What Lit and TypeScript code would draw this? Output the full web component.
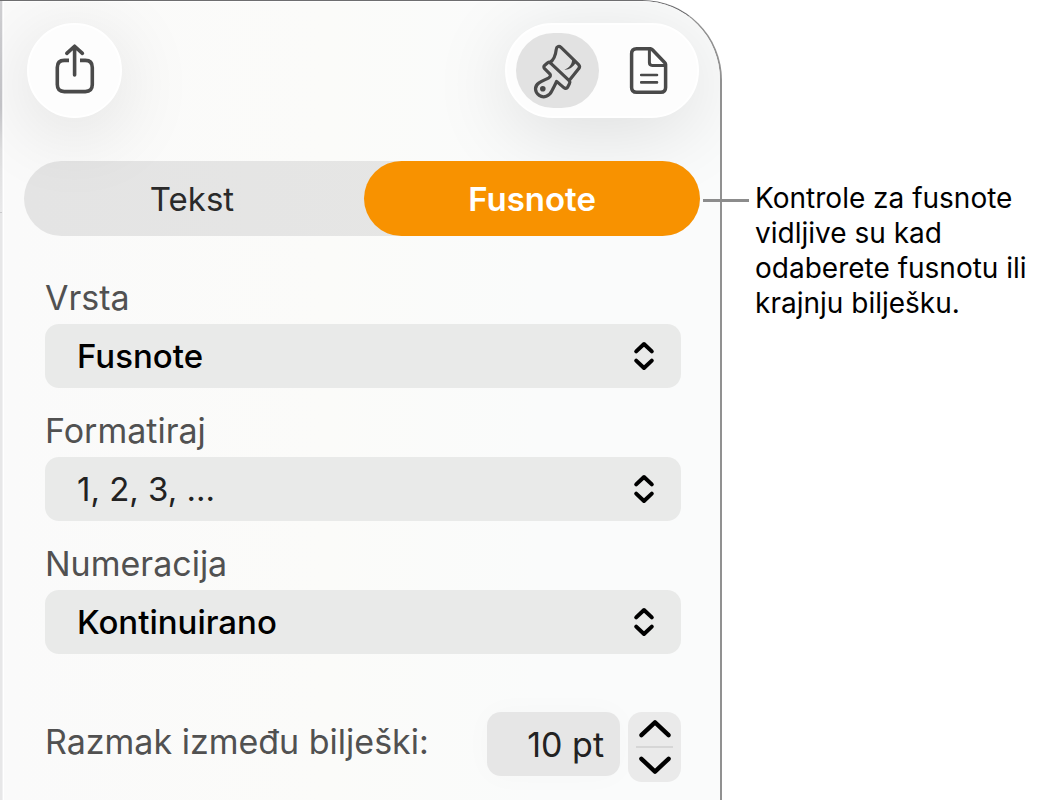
import { LitElement, html, css, svg } from "lit";
import { customElement, property, state } from "lit/decorators.js";
import { classMap } from "lit/directives/class-map.js";

const shareIcon = svg`
  <svg viewBox="0 0 60 60" aria-hidden="true">
    <g fill="none" stroke="currentColor" stroke-width="3.6" stroke-linecap="round" stroke-linejoin="round">
      <path stroke-linecap="butt" d="M24 19.4H19.3Q12.3 19.4 12.3 26.4V43.6Q12.3 50.6 19.3 50.6H40.3Q47.3 50.6 47.3 43.6V26.4Q47.3 19.4 40.3 19.4H35"/>
      <path d="M29.6 34V5.6M21.8 12.4L29.6 5.2L37.4 12.4"/>
    </g>
  </svg>`;

const brushIcon = svg`
  <svg viewBox="0 0 60 60" aria-hidden="true">
    <g fill="none" stroke="currentColor" stroke-width="3.2" stroke-linecap="round" stroke-linejoin="round">
      <path d="M21.8 21.6C26.4 18.6 27.6 14.6 28.2 8.6C28.5 5.6 30.8 4.4 33 6.4L50.4 23.4Q52.6 25.6 50.6 27.8L41.2 39.6"/>
      <path d="M21.8 21.4L41.2 39.6Q42.4 41 41.4 42.8L39.6 46.2Q38 48.4 35.8 46.6L28.6 40.4C27.6 43 26 45.6 24 49.6C21.4 55.4 15.6 57.4 11.2 54.4C6.4 51 6.2 45 11 41.8C14.6 39.6 18.4 38.2 20.8 36.8Q23.4 35 21.8 32.8L16.6 27.6Q15 25.8 16.8 24.2L19.4 22Q20.6 20.6 21.8 21.4Z"/>
    </g>
    <path fill="currentColor" d="M44 17.2C44.6 22.4 42 26.4 36.4 28.8C40.6 29.2 44.6 26.8 48 21.8Z"/>
    <circle fill="currentColor" cx="14.8" cy="47.8" r="2.8"/>
  </svg>`;

const documentIcon = svg`
  <svg viewBox="0 0 60 60" aria-hidden="true">
    <g fill="none" stroke="currentColor" stroke-linecap="round" stroke-linejoin="round">
      <path stroke-width="3.5" d="M31.6 7.8H17.6Q12.6 7.8 12.6 12.8V46.4Q12.6 51.2 17.6 51.2H41.8Q46.6 51.2 46.6 46.4V23.4Q46.6 22.4 45.6 21.4L33.4 8.8Q32.4 7.8 31.6 7.8Z"/>
      <path stroke-width="3" d="M30.4 8V21.6Q30.4 24.4 33.2 24.4H46"/>
      <path stroke-width="2.6" d="M22.2 34H38M22.2 41.4H38"/>
    </g>
  </svg>`;

const BASE = css`
  :host {
    font-family: Inter, "Liberation Sans", sans-serif;
  }
  *,
  *::before {
    box-sizing: border-box;
  }
  button,
  input,
  select {
    margin: 0;
    padding: 0;
    border: 0;
    font: inherit;
    color: inherit;
    background: none;
  }
`;

@customElement("popup-field")
class PopupField extends LitElement {
  @property() label = "";
  @property({ type: Array }) options: string[] = [];
  @property({ type: Boolean }) strong = false;

  static styles = [
    BASE,
    css`
      :host {
        display: block;
      }
      .label {
        display: block;
        margin-bottom: 5px;
        font-size: 34px;
        line-height: 42px;
        color: #515151;
      }
      .box {
        display: grid;
        align-items: center;
        border-radius: 14px;
        background: #e9eae9;
      }
      .select {
        grid-area: 1 / 1;
        width: 100%;
        height: 64px;
        padding: 0 64px 0 32px;
        appearance: none;
        font-size: 33px;
        color: #222;
      }
      .strong {
        font-weight: 500;
        color: #000;
      }
      .arrows {
        grid-area: 1 / 1;
        justify-self: end;
        width: 22px;
        height: 32px;
        margin-right: 26px;
        pointer-events: none;
      }
    `,
  ];

  render() {
    return html`
      <label class="label" for="choice">${this.label}</label>
      <div class="box">
        <select id="choice" class=${classMap({ select: true, strong: this.strong })}>
          ${this.options.map((o) => html`<option>${o}</option>`)}
        </select>
        <svg class="arrows" viewBox="0 0 22 32" aria-hidden="true">
          <path
            d="M3.2 11.4L11 4L18.8 11.4M3.2 20.6L11 28L18.8 20.6"
            fill="none"
            stroke="#000"
            stroke-width="4"
            stroke-linecap="round"
            stroke-linejoin="round"
          />
        </svg>
      </div>
    `;
  }
}

@customElement("app-root")
class AppRoot extends LitElement {
  @state() private tab = 1;
  @state() private gap = 10;

  static styles = [
    BASE,
    css`
      :host {
        display: grid;
        grid-template-columns: minmax(0, 9fr) minmax(0, 4fr);
        min-height: 100vh;
        padding-bottom: 1px;
        box-sizing: border-box;
        background: #fff;
      }
      .window {
        display: grid;
        grid-template-columns: 3px minmax(0, 1fr);
        border-top: 1px solid #6e6e70;
        border-right: 2px solid #919191;
        border-top-right-radius: 80px;
        overflow: hidden;
        background: #fafafa;
      }
      .edge {
        display: grid;
        grid-template-rows: 212px 1fr;
        border-right: 1px solid #f1f1f2;
      }
      .edge-top {
        background: linear-gradient(#cfcfd2, #c6c6ca 50%, #dededf 70%, #e9e9ea);
        border-bottom: 1px solid #c9c9cb;
      }
      .edge-bottom {
        background: #e7e7e8;
      }
      .panel {
        padding: 21px 20px 16px 20px;
        border-left: 1px solid #fff;
        border-top: 1px solid #fff;
        background: linear-gradient(90deg, #fafafa, #fbfbf9 45%, #fafbfb 75%);
      }
      .toolbar {
        display: flex;
        justify-content: space-between;
        padding: 0 1px 0 3px;
      }
      .round,
      .group {
        height: 95px;
        border: 2px solid #fff;
        border-radius: 48px;
        background: #fdfdfd;
        box-shadow: 0 14px 80px rgba(0, 0, 0, 0.12);
        color: #4a4a4a;
      }
      .round {
        width: 95px;
      }
      .group {
        display: flex;
        align-items: center;
        gap: 8px;
        padding: 0 7px 0 9px;
      }
      .tool {
        width: 83px;
        height: 75px;
        border-radius: 38px;
      }
      .tool.on {
        background: #e2e2e2;
      }
      .round svg,
      .tool svg {
        display: block;
        width: 60px;
        height: 60px;
        margin: 0 auto;
      }
      .tabs {
        display: grid;
        grid-template-columns: 1fr 1fr;
        gap: 4px;
        margin-top: 43px;
        border-radius: 38px;
        background: linear-gradient(90deg, #e4e4e4, #e7e7e5);
      }
      .tab {
        height: 75px;
        border-radius: 38px;
        font-size: 33px;
        color: #2a2a2a;
      }
      .tab.on {
        background: #f89200;
        font-weight: 600;
        color: #fff;
      }
      .form {
        display: grid;
        gap: 22px;
        padding: 41px 19px 0 21px;
      }
      .spacing {
        display: flex;
        align-items: flex-start;
        margin-top: 36px;
      }
      .spacing-label {
        flex: 1;
        font-size: 34px;
        line-height: 60px;
        color: #515151;
      }
      .amount {
        width: 133px;
        height: 64px;
        padding-right: 16px;
        border-radius: 14px;
        background: #e6e6e6;
        box-shadow: 0 0 30px rgba(0, 0, 0, 0.025);
        font-size: 34px;
        color: #222;
        text-align: right;
      }
      .stepper {
        display: grid;
        grid-template-rows: 1fr 2px 1fr;
        justify-items: center;
        width: 53px;
        height: 70px;
        margin-left: 8px;
        border-radius: 14px;
        background: #eaeaea;
      }
      .step {
        width: 100%;
      }
      .step svg {
        display: block;
        width: 34px;
        height: 22px;
        margin: 0 auto;
      }
      .rule {
        width: 37px;
        background: #d6d6d6;
      }
      .callout {
        z-index: 1;
        display: flex;
        align-items: flex-start;
        gap: 6px;
        margin: 181px 0 0 -19px;
      }
      .leader {
        flex: none;
        width: 46px;
        height: 3px;
        margin-top: 18px;
        background: #8c8c8c;
      }
      .note {
        margin: 0;
        font-size: 28px;
        line-height: 35px;
        color: #000;
      }
    `,
  ];

  render() {
    return html`
      <main class="window">
        <div class="edge">
          <div class="edge-top"></div>
          <div class="edge-bottom"></div>
        </div>
        <div class="panel">
          <div class="toolbar">
            <button class="round" aria-label="Dijeli">${shareIcon}</button>
            <div class="group">
              <button class="tool on" aria-label="Formatiraj">${brushIcon}</button>
              <button class="tool" aria-label="Dokument">${documentIcon}</button>
            </div>
          </div>
          <div class="tabs" role="tablist">
            ${["Tekst", "Fusnote"].map(
              (name, i) => html`<button
                class=${classMap({ tab: true, on: this.tab === i })}
                role="tab"
                aria-selected=${this.tab === i ? "true" : "false"}
                @click=${() => (this.tab = i)}
              >${name}</button>`
            )}
          </div>
          <div class="form">
            <popup-field label="Vrsta" .options=${["Fusnote"]} strong></popup-field>
            <popup-field label="Formatiraj" .options=${["1, 2, 3, …"]}></popup-field>
            <popup-field label="Numeracija" .options=${["Kontinuirano"]} strong></popup-field>
            <div class="spacing">
              <label class="spacing-label" for="gap">Razmak između bilješki:</label>
              <input class="amount" id="gap" type="text" .value=${`${this.gap} pt`} />
              <div class="stepper">
                <button class="step" aria-label="Povećaj" @click=${() => this.gap++}>
                  ${this.chevron("M3.4 17.2L17 4.4L30.6 17.2")}
                </button>
                <div class="rule"></div>
                <button class="step" aria-label="Smanji" @click=${() => this.gap--}>
                  ${this.chevron("M3.4 4.8L17 17.6L30.6 4.8")}
                </button>
              </div>
            </div>
          </div>
        </div>
      </main>
      <aside class="callout">
        <div class="leader"></div>
        <p class="note">Kontrole za fusnote vidljive su kad odaberete fusnotu ili krajnju bilješku.</p>
      </aside>
    `;
  }

  private chevron(d: string) {
    return svg`<svg viewBox="0 0 34 22" aria-hidden="true">
      <path d=${d} fill="none" stroke="#000" stroke-width="4.4" stroke-linecap="round" stroke-linejoin="round"/>
    </svg>`;
  }
}
